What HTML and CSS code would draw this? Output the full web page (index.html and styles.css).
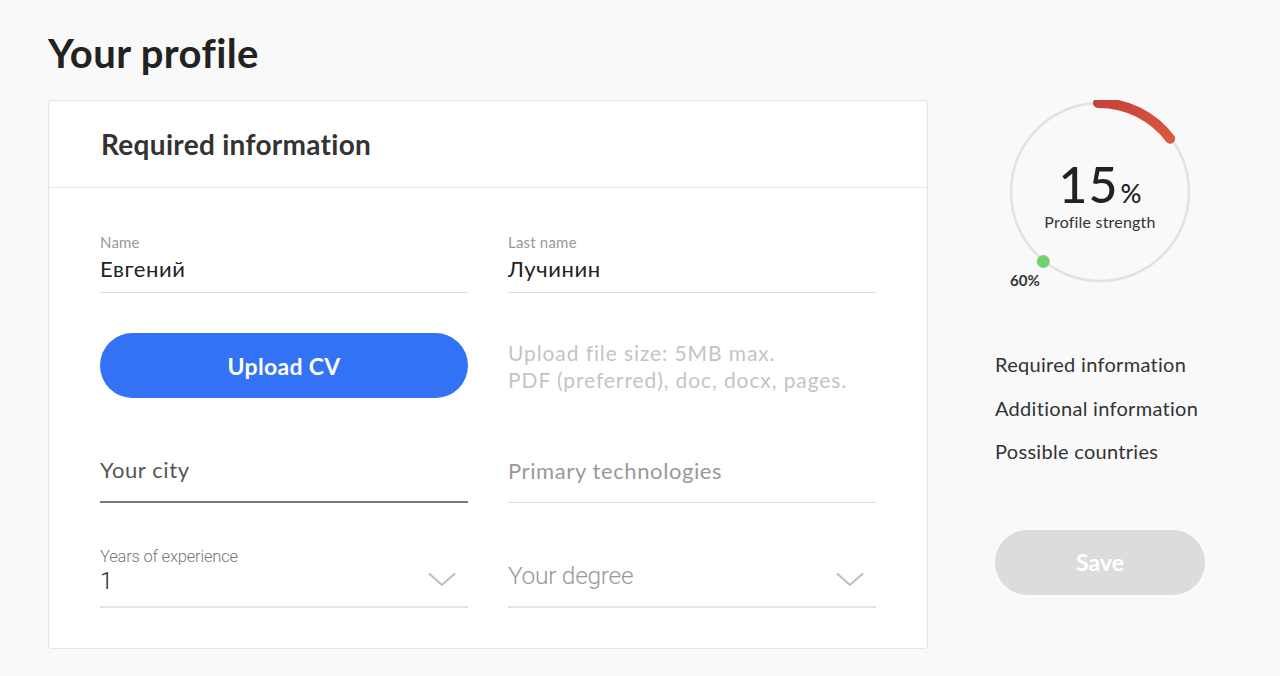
FILE: index.html
```html
<!DOCTYPE html>
<html lang="en">
<head>
  <meta charset="UTF-8" />
  <meta name="viewport" content="width=device-width, initial-scale=1.0" />
  <title>Your profile</title>
  <link rel="stylesheet" href="styles.css">
</head>
<body>
  <div class="page">
    <div class="main">
      <h1 class="page-title">Your profile</h1>

      <div class="card">
        <div class="card-header">Required information</div>

        <div class="card-body">
          <div class="field">
            <div class="field-label">Name</div>
            <div class="field-value">Евгений</div>
          </div>
          <div class="field">
            <div class="field-label">Last name</div>
            <div class="field-value">Лучинин</div>
          </div>

          <button class="upload-btn">Upload CV</button>
          <div class="upload-hint">Upload file size: 5MB max.<br>PDF (preferred), doc, docx, pages.</div>

          <div class="field field-empty field-active">
            <div class="field-placeholder">Your city</div>
          </div>
          <div class="field field-empty">
            <div class="field-placeholder">Primary technologies</div>
          </div>

          <div class="field field-select">
            <div class="select-text">
              <div class="select-label">Years of experience</div>
              <div class="select-value">1</div>
            </div>
            <svg class="chevron" width="28" height="15" viewBox="0 0 28 15"><path d="M1 1.5 L14 13 L27 1.5" fill="none" stroke="#bdbdbd" stroke-width="2"/></svg>
          </div>
          <div class="field field-select">
            <div class="select-text">
              <div class="select-placeholder">Your degree</div>
            </div>
            <svg class="chevron" width="28" height="15" viewBox="0 0 28 15"><path d="M1 1.5 L14 13 L27 1.5" fill="none" stroke="#bdbdbd" stroke-width="2"/></svg>
          </div>
        </div>
      </div>
    </div>

    <div class="side">
      <div class="strength">
        <svg class="strength-ring" width="210" height="200" viewBox="0 0 210 200">
          <circle cx="105" cy="92" r="89" fill="none" stroke="#e2e2e2" stroke-width="2.5"/>
          <defs>
            <linearGradient id="arcGrad" x1="0" y1="0" x2="1" y2="1">
              <stop offset="0" stop-color="#c7423a"/>
              <stop offset="1" stop-color="#d95a3e"/>
            </linearGradient>
          </defs>
          <path d="M103 3 A89 89 0 0 1 175.2 38.7" fill="none" stroke="url(#arcGrad)" stroke-width="10" stroke-linecap="round"/>
          <circle cx="48.3" cy="161.5" r="6.5" fill="#6fd46f"/>
        </svg>
        <div class="strength-center">
          <div class="strength-value">15<span class="strength-pct">%</span></div>
          <div class="strength-label">Profile strength</div>
        </div>
        <div class="strength-mark">60%</div>
      </div>

      <ul class="side-nav">
        <li>Required information</li>
        <li>Additional information</li>
        <li>Possible countries</li>
      </ul>

      <button class="save-btn">Save</button>
    </div>
  </div>
</body>
</html>
```

FILE: styles.css
```css
body {
  margin: 0;
  background: #f9f9f9;
  font-family: 'Lato', 'Noto Sans', sans-serif;
  color: #2a2a2a;
}

.page {
  display: flex;
  padding: 0 0 0 48px;
  gap: 67px;
}

.main {
  width: 880px;
}

/* 頁面標題 */
.page-title {
  margin: 0;
  padding-top: 30px;
  height: 100px;
  box-sizing: border-box;
  font-size: 40px;
  line-height: 46px;
  font-weight: 700;
  color: #222;
  letter-spacing: 0.4px;
}

.card {
  background: #fff;
  border: 1px solid #e6e6e6;
  border-radius: 3px;
}

.card-header {
  height: 86px;
  display: flex;
  align-items: center;
  padding-left: 52px;
  font-size: 28px;
  font-weight: 700;
  color: #333;
  letter-spacing: 0.3px;
  border-bottom: 1px solid #e6e6e6;
}

.card-body {
  display: grid;
  grid-template-columns: 368px 368px;
  grid-auto-rows: 65px;
  column-gap: 40px;
  row-gap: 40px;
  padding: 40px 51px 40px 51px;
}

/* 輸入欄位 */
.field {
  display: flex;
  flex-direction: column;
  justify-content: flex-end;
  border-bottom: 1px solid #dcdcdc;
  padding-bottom: 9px;
}

.field-label {
  font-size: 15px;
  line-height: 18px;
  color: #999;
  margin-bottom: 4px;
  letter-spacing: 0.2px;
}

.field-value {
  font-size: 22px;
  line-height: 28px;
  color: #222;
  letter-spacing: 0.6px;
}

.field-empty {
  padding-bottom: 17px;
}

.field-active {
  border-bottom: 2px solid #7a7a7a;
}

.field-placeholder {
  font-size: 22px;
  line-height: 28px;
  color: #999;
  letter-spacing: 0.6px;
}

.field-active .field-placeholder {
  color: #555;
}

.field-select {
  flex-direction: row;
  align-items: flex-end;
  justify-content: space-between;
  border-bottom: 2px solid #e4e4e4;
  padding-bottom: 0;
}

.select-text {
  font-family: 'Roboto', sans-serif;
  font-weight: 300;
}

.select-label {
  font-size: 16.5px;
  line-height: 18px;
  color: #777;
  letter-spacing: -0.2px;
  margin-bottom: 2px;
}

.select-value {
  font-size: 23px;
  line-height: 28px;
  color: #222;
  margin-bottom: 10px;
}

.select-placeholder {
  font-size: 24.5px;
  line-height: 28px;
  color: #999;
  margin-bottom: 16px;
  letter-spacing: -0.3px;
}

.chevron {
  margin-right: 12px;
  margin-bottom: 19px;
}

/* 上傳按鈕 */
.upload-btn {
  border: none;
  border-radius: 33px;
  background: #3372f5;
  color: #fff;
  font-family: inherit;
  font-size: 23px;
  font-weight: 700;
  letter-spacing: 0.3px;
  cursor: pointer;
}

.upload-hint {
  font-size: 21px;
  line-height: 27px;
  color: #c4c4c4;
  padding-top: 6px;
  letter-spacing: 0.9px;
}

/* 右側欄 */
.side {
  width: 210px;
  padding-top: 100px;
}

.strength {
  position: relative;
  height: 200px;
}

.strength-ring {
  display: block;
}

.strength-center {
  position: absolute;
  top: 56px;
  left: 0;
  right: 0;
  text-align: center;
}

.strength-value {
  font-size: 50px;
  line-height: 56px;
  font-weight: 500;
  color: #222;
  letter-spacing: 1px;
}

.strength-pct {
  font-size: 26px;
  letter-spacing: 0;
  margin-left: 2px;
}

.strength-label {
  font-size: 16px;
  line-height: 18px;
  color: #333;
  margin-top: -8px;
  letter-spacing: 0.2px;
}

.strength-mark {
  position: absolute;
  left: 15px;
  top: 171px;
  font-size: 15px;
  font-weight: 700;
  color: #333;
}

.side-nav {
  list-style: none;
  margin: 52px 0 0 0;
  padding: 0;
}

.side-nav li {
  font-size: 20px;
  line-height: 25px;
  color: #333;
  margin-bottom: 18.5px;
  letter-spacing: 0.3px;
}

.save-btn {
  margin-top: 47px;
  width: 210px;
  height: 65px;
  border: none;
  border-radius: 33px;
  background: #dcdcdc;
  color: #fff;
  font-family: inherit;
  font-size: 23px;
  font-weight: 700;
}
```
